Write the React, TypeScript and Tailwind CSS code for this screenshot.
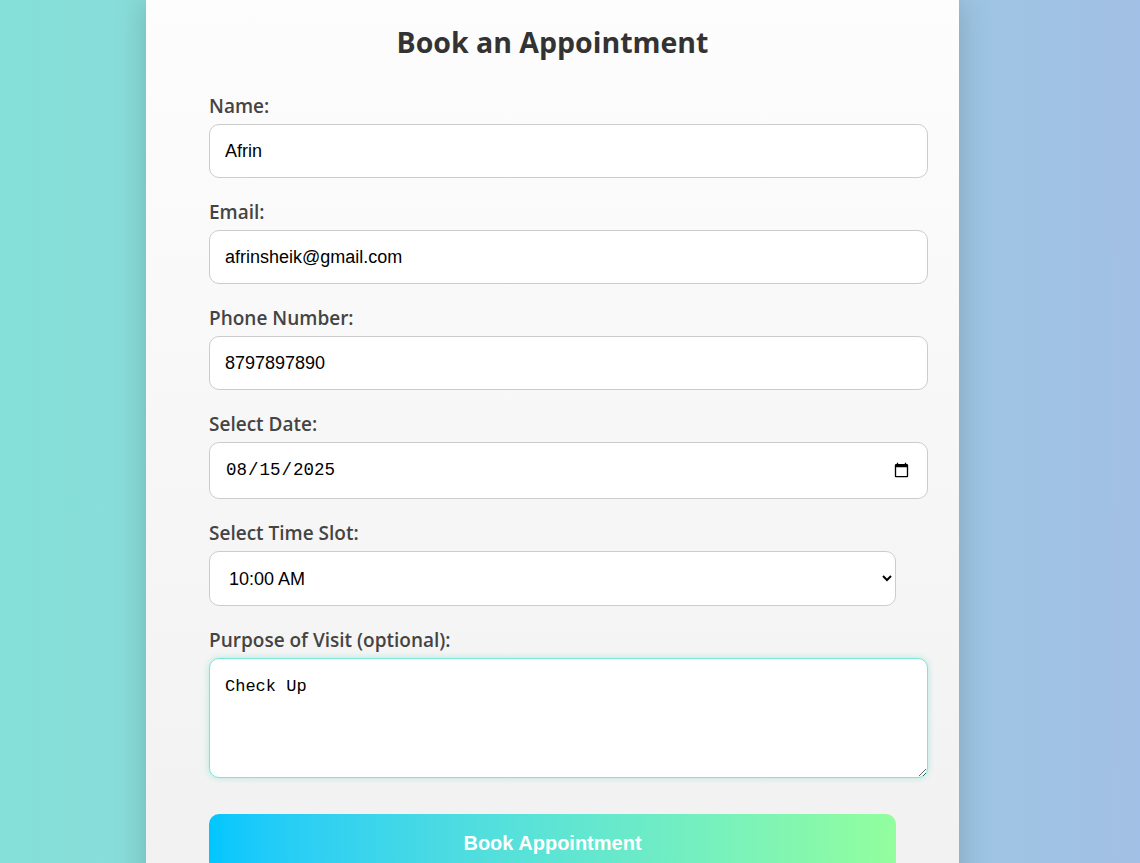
import React from "react";

const labelCls =
  "block text-[19px] leading-[25px] font-semibold text-[#444] mb-[5px] font-['Open_Sans',sans-serif]";
const inputCls =
  "block w-[calc(100%+32px)] h-[54px] px-[15px] border border-[#cccccc] rounded-[10px] bg-white text-[18px] text-black outline-none";

const App: React.FC = () => {
  return (
    <div className="min-h-[863px] w-full bg-linear-to-r from-[#84e0d8] to-[#a2c0e5] font-['Open_Sans',sans-serif] overflow-hidden">
      <div className="ml-[146px] w-[813px] min-h-[900px] px-[63px] pt-[22px] bg-linear-to-b from-[#fdfdfd] to-[#f1f1f1] shadow-[0_0_30px_rgba(0,0,0,0.18)]">
        <h2 className="text-center text-[28.5px] leading-[40px] font-bold text-[#333] mb-[32px]">
          Book an Appointment
        </h2>

        <form className="flex flex-col">
          <label className={labelCls}>Name:</label>
          <input
            type="text"
            defaultValue="Afrin"
            className={inputCls + " font-['Liberation_Sans',sans-serif]"}
          />

          <label className={labelCls + " mt-[22px]"}>Email:</label>
          <input
            type="email"
            defaultValue="afrinsheik@gmail.com"
            className={inputCls + " font-['Liberation_Sans',sans-serif]"}
          />

          <label className={labelCls + " mt-[22px]"}>Phone Number:</label>
          <input
            type="tel"
            defaultValue="8797897890"
            className={inputCls + " font-['Liberation_Sans',sans-serif]"}
          />

          <label className={labelCls + " mt-[22px]"}>Select Date:</label>
          <input
            type="date"
            defaultValue="2025-08-15"
            className="block w-[calc(100%+32px)] h-[57px] px-[15px] border border-[#cccccc] rounded-[10px] bg-white text-[17.5px] text-black font-['Liberation_Mono',monospace] outline-none"
          />

          <label className={labelCls + " mt-[22px]"}>Select Time Slot:</label>
          <select
            defaultValue="10:00 AM"
            className="block w-full h-[55px] px-[15px] border border-[#cccccc] rounded-[10px] bg-white text-[18px] text-black font-['Liberation_Sans',sans-serif] outline-none"
          >
            <option>9:00 AM</option>
            <option>10:00 AM</option>
            <option>11:00 AM</option>
            <option>2:00 PM</option>
            <option>4:00 PM</option>
          </select>

          <label className={labelCls + " mt-[22px]"}>
            Purpose of Visit (optional):
          </label>
          <textarea
            defaultValue="Check Up"
            className="block w-[calc(100%+32px)] h-[120px] px-[15px] pt-[18px] pb-[12px] border border-[#7fe6d2] rounded-[10px] bg-white text-[17px] leading-[20px] text-black font-['Liberation_Mono',monospace] outline-none shadow-[0_0_6px_rgba(90,220,200,0.45)]"
          />

          <button
            type="button"
            className="mt-[36px] w-full h-[58px] rounded-[10px] bg-linear-to-r from-[#00c6ff] to-[#92fe9d] text-white text-[20px] font-bold font-['Liberation_Sans',sans-serif]"
          >
            Book Appointment
          </button>
        </form>
      </div>
    </div>
  );
};

export default App;
